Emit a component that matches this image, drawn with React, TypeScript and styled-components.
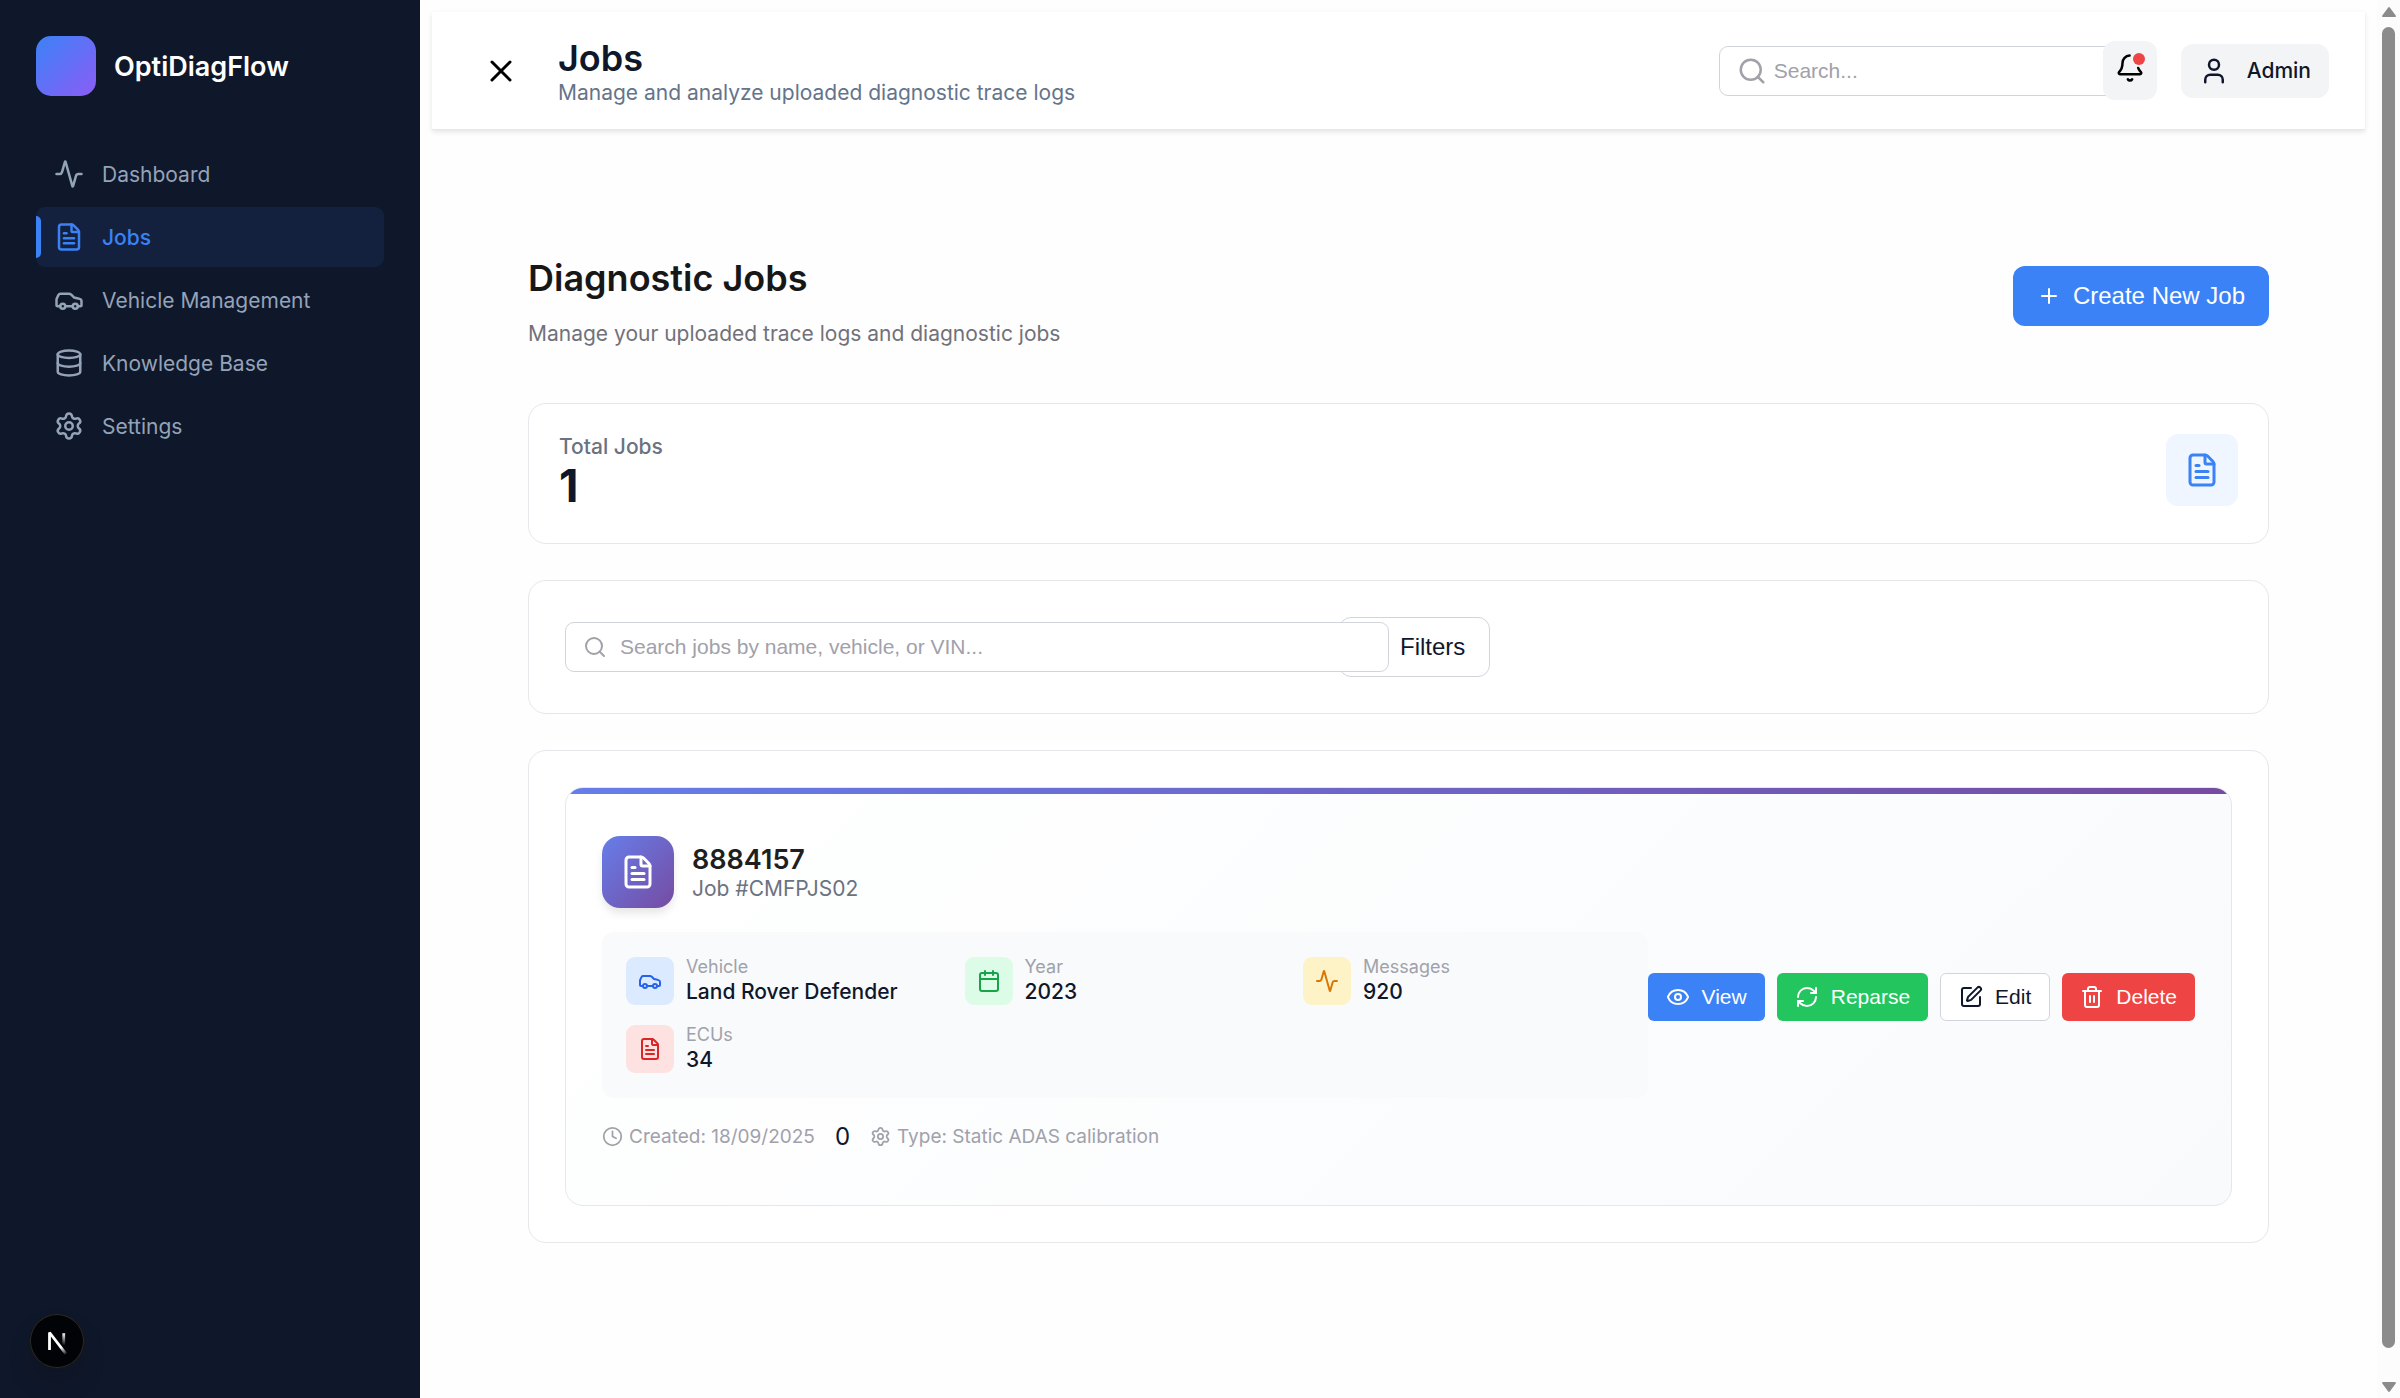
import React from 'react';
import styled, { createGlobalStyle } from 'styled-components';
import {
  Activity,
  Calendar,
  Clock,
  Database,
  Eye,
  FileText,
  Funnel,
  Plus,
  RefreshCw,
  Search,
  Settings,
  SquarePen,
  Trash2,
  User,
  X,
} from 'lucide-react';

const sans = `Inter, 'Liberation Sans', sans-serif`;
const control = `'Liberation Sans', Arial, sans-serif`;

const GlobalStyle = createGlobalStyle`
  *, *::before, *::after { box-sizing: border-box; }
  body {
    margin: 0;
    background: #fefefe;
    color: #0f172a;
    font-family: ${sans};
    font-size: 24px;
  }
  h1, h2, h3, p, dl, dd, dt, ul { margin: 0; padding: 0; }
  ul { list-style: none; }
  svg { display: block; flex: none; }
  button { cursor: pointer; }
`;

const Shell = styled.div`
  display: grid;
  grid-template-columns: 420px minmax(0, 1fr) 23px;
  min-height: 100vh;
`;

/* Sidebar */

const Sidebar = styled.aside`
  position: sticky;
  top: 0;
  height: 100vh;
  padding: 36px;
  background: #0f172a;
`;

const Brand = styled.div`
  display: flex;
  align-items: center;
  gap: 18px;
  margin-bottom: 48px;
  color: #ffffff;
  font-size: 27px;
  font-weight: 600;
`;

const BrandMark = styled.span`
  width: 60px;
  height: 60px;
  border-radius: 15px;
  background: linear-gradient(135deg, #3b82f6, #8b5cf6);
`;

const NavList = styled.ul`
  display: flex;
  flex-direction: column;
  gap: 3px;
`;

const NavLink = styled.a<{ $active?: boolean }>`
  position: relative;
  display: flex;
  align-items: center;
  gap: 18px;
  height: 60px;
  padding: 0 18px;
  border-radius: 9px;
  background: ${(p) => (p.$active ? 'rgba(59, 130, 246, 0.1)' : 'transparent')};
  color: ${(p) => (p.$active ? '#3b82f6' : '#94a3b8')};
  font-size: 21px;
  font-weight: ${(p) => (p.$active ? 500 : 400)};
  text-decoration: none;

  &::before {
    content: '';
    display: ${(p) => (p.$active ? 'block' : 'none')};
    position: absolute;
    left: 0;
    top: 9px;
    bottom: 9px;
    width: 5px;
    border-radius: 0 5px 5px 0;
    background: #3b82f6;
  }
`;

const DevBadge = styled.button`
  position: fixed;
  left: 30px;
  bottom: 30px;
  width: 54px;
  height: 54px;
  padding: 0;
  border: 0;
  border-radius: 50%;
  background: #020307;
  box-shadow: inset 0 0 0 1px #2b2b2b, 0 0 0 1px #171717, 0 16px 32px -8px rgba(0, 0, 0, 0.24);
`;

/* Header */

const Page = styled.div`
  padding: 12px;
`;

const TopBar = styled.header`
  display: flex;
  align-items: center;
  justify-content: space-between;
  height: 118px;
  padding: 0 36px;
  border-bottom: 1px solid #e5e7eb;
  background: #ffffff;
  box-shadow: 0 2px 5px rgba(0, 0, 0, 0.1);
`;

const TopGroup = styled.div`
  display: flex;
  align-items: center;
  gap: 24px;
`;

const CloseButton = styled.button`
  padding: 15px;
  border: 0;
  background: transparent;
  color: #000000;
`;

const TopTitle = styled.h1`
  font-size: 36px;
  font-weight: 600;
  line-height: 44px;
`;

const TopSubtitle = styled.p`
  color: #64748b;
  font-size: 21px;
  line-height: 25px;
`;

const SearchField = styled.label<{ $width: number; $raised?: boolean }>`
  position: relative;
  display: flex;
  align-items: center;
  width: ${(p) => p.$width}px;
  z-index: ${(p) => (p.$raised ? 1 : 0)};

  svg {
    position: absolute;
    left: 18px;
    color: #a1a1aa;
    pointer-events: none;
  }
`;

const SearchInput = styled.input`
  flex: none;
  width: calc(100% + 74px);
  height: 50px;
  padding: 0 18px 0 54px;
  border: 1px solid #d1d5db;
  border-radius: 9px;
  background: #ffffff;
  color: #0f172a;
  font-family: ${control};
  font-size: 21px;

  &::placeholder {
    color: #a1a1aa;
    opacity: 1;
  }
`;

const BellButton = styled.button`
  position: relative;
  width: 54px;
  height: 59px;
  padding: 12px;
  border: 0;
  border-radius: 12px;
  background: #f3f4f6;
  color: #000000;
  display: flex;
  align-items: flex-start;
  z-index: 1;
`;

const AlertDot = styled.span`
  position: absolute;
  top: 12px;
  right: 12px;
  width: 12px;
  height: 12px;
  border-radius: 50%;
  background: #ef4444;
`;

const AdminButton = styled.button`
  display: flex;
  align-items: center;
  gap: 18px;
  height: 54px;
  padding: 0 18px;
  border: 0;
  border-radius: 12px;
  background: #f3f4f6;
  color: #0f172a;
  font-family: ${sans};
  font-size: 21px;
  font-weight: 500;
`;

/* Jobs page */

const Content = styled.main`
  display: flex;
  flex-direction: column;
  gap: 36px;
  padding: 115px 96px 144px;
`;

const PageHead = styled.div`
  display: flex;
  align-items: center;
  justify-content: space-between;
  margin-bottom: 20px;
`;

const PageTitle = styled.h2`
  margin-bottom: 10px;
  color: #171717;
  font-size: 36px;
  font-weight: 600;
  line-height: 66px;
`;

const PageSubtitle = styled.p`
  color: #71717a;
  font-size: 21px;
  line-height: 26px;
`;

type Tone = 'primary' | 'success' | 'outline' | 'danger';

const tones: Record<Tone, string> = {
  primary: 'background: #3b82f6; color: #ffffff; border: 0;',
  success: 'background: #22c55e; color: #ffffff; border: 0;',
  outline: 'background: #ffffff; color: #0f172a; border: 1px solid #d1d5db;',
  danger: 'background: #ef4444; color: #ffffff; border: 0;',
};

const Button = styled.button<{ $tone: Tone; $size?: 'small' }>`
  display: flex;
  align-items: center;
  gap: 12px;
  height: ${(p) => (p.$size ? 48 : 60)}px;
  padding: 0 ${(p) => (p.$size ? 18 : 24)}px;
  border-radius: ${(p) => (p.$size ? 6 : 12)}px;
  font-family: ${control};
  font-size: ${(p) => (p.$size ? 21 : 24)}px;
  ${(p) => tones[p.$tone]}
`;

const Card = styled.section<{ $pad?: number }>`
  padding: ${(p) => p.$pad ?? 36}px;
  border: 1px solid #e5e7eb;
  border-radius: 18px;
  background: #ffffff;
`;

const StatCard = styled(Card)`
  display: flex;
  align-items: flex-start;
  justify-content: space-between;
`;

const StatLabel = styled.p`
  color: #6b7280;
  font-size: 21px;
  font-weight: 500;
  line-height: 25px;
`;

const StatValue = styled.p`
  font-size: 45px;
  font-weight: 700;
  line-height: 54px;
`;

const StatIcon = styled.span`
  display: grid;
  place-items: center;
  width: 72px;
  height: 72px;
  border-radius: 12px;
  background: #eff6ff;
  color: #3b82f6;
`;

const FilterBar = styled(Card)`
  display: flex;
  align-items: center;
  gap: 24px;
`;

const JobCard = styled.article`
  position: relative;
  display: flex;
  align-items: center;
  padding: 48px 36px;
  border: 1px solid #e2e8f0;
  border-radius: 18px;
  background: linear-gradient(135deg, #ffffff, #f8fafc);
  overflow: hidden;

  &::before {
    content: '';
    position: absolute;
    inset: 0 0 auto;
    height: 6px;
    background: linear-gradient(90deg, #667eea, #764ba2);
  }
`;

const JobBody = styled.div`
  display: flex;
  flex: 1;
  flex-direction: column;
  gap: 24px;
  min-width: 0;
`;

const JobHead = styled.div`
  display: flex;
  align-items: center;
  gap: 18px;
`;

const JobIcon = styled.span`
  display: grid;
  place-items: center;
  width: 72px;
  height: 72px;
  border-radius: 18px;
  background: linear-gradient(135deg, #667eea, #764ba2);
  box-shadow: 0 6px 9px -1px rgba(0, 0, 0, 0.1);
  color: #ffffff;
`;

const JobTitle = styled.h3`
  color: #1f1f1f;
  font-size: 27px;
  font-weight: 600;
  line-height: 33px;
`;

const JobNumber = styled.p`
  color: #6b7280;
  font-size: 21px;
  line-height: 25px;
`;

const FactGrid = styled.dl`
  display: grid;
  grid-template-columns: repeat(3, minmax(0, 1fr));
  gap: 18px;
  padding: 24px;
  border-radius: 12px;
  background: #f8fafc;
`;

const Fact = styled.div`
  display: flex;
  align-items: center;
  gap: 12px;
  height: 50px;
`;

const FactIcon = styled.span<{ $bg: string; $fg: string }>`
  display: grid;
  place-items: center;
  width: 48px;
  height: 48px;
  border-radius: 9px;
  background: ${(p) => p.$bg};
  color: ${(p) => p.$fg};
`;

const FactLabel = styled.dt`
  color: #a1a1aa;
  font-size: 18px;
  line-height: 22px;
`;

const FactValue = styled.dd`
  font-size: 21px;
  font-weight: 500;
  line-height: 28px;
`;

const JobMeta = styled.div`
  display: flex;
  align-items: center;
  gap: 20px;
  margin-bottom: 6px;
  line-height: 29px;
`;

const MetaItem = styled.span`
  display: flex;
  align-items: center;
  gap: 6px;
  color: #a1a1aa;
  font-size: 19px;
`;

const JobActions = styled.div`
  display: flex;
  gap: 12px;
`;

/* Scroll rail */

const Rail = styled.div`
  position: sticky;
  top: 0;
  display: flex;
  flex-direction: column;
  align-items: center;
  gap: 10px;
  height: 100vh;
  padding: 7px 0 6px;
  background: #fcfcfc;
  color: #8b8b8b;
`;

const RailTrack = styled.div`
  flex: 1;
`;

const RailThumb = styled.div`
  width: 13px;
  height: calc(100% - 24px);
  border-radius: 7px;
  background: #8b8b8b;
`;

const CarIcon = ({ size }: { size: number }) => (
  <svg width={size} height={size} viewBox="0 0 24 24" fill="none" stroke="currentColor" strokeWidth="2" strokeLinecap="round" strokeLinejoin="round" aria-hidden="true">
    <path d="M19 17h2c.6 0 1-.4 1-1v-3c0-.9-.7-1.7-1.5-1.9C18.7 10.6 16 10 16 10s-1.3-1.4-2.2-2.3c-.5-.4-1.1-.7-1.8-.7H5c-.6 0-1.1.4-1.4.9l-1.4 2.9A3.7 3.7 0 0 0 2 12v4c0 .6.4 1 1 1h2" />
    <circle cx="7" cy="17" r="2" />
    <path d="M9 17h6" />
    <circle cx="17" cy="17" r="2" />
  </svg>
);

const BellIcon = ({ size }: { size: number }) => (
  <svg width={size} height={size} viewBox="0 0 24 24" fill="none" stroke="currentColor" strokeWidth="2" strokeLinecap="round" strokeLinejoin="round" aria-hidden="true">
    <path d="M10.268 21a2 2 0 0 0 3.464 0" />
    <path d="M11.680 2.009A6 6 0 0 0 6 8c0 4.499-1.411 5.956-2.738 7.326A1 1 0 0 0 4 17h16a1 1 0 0 0 .74-1.673c-.824-.85-1.678-1.731-2.210-3.348" />
  </svg>
);

const NextMark = () => (
  <svg width="54" height="54" viewBox="0 0 54 54" fill="none" aria-hidden="true">
    <defs>
      <linearGradient id="markDiagonal" gradientUnits="userSpaceOnUse" x1="9.9" y1="11.1" x2="13.6" y2="15.8">
        <stop stopColor="#ffffff" />
        <stop offset="1" stopColor="#ffffff" stopOpacity="0" />
      </linearGradient>
      <linearGradient id="markStem" gradientUnits="userSpaceOnUse" x1="11.8" y1="1.4" x2="11.8" y2="9.6">
        <stop stopColor="#ffffff" />
        <stop offset="1" stopColor="#ffffff" stopOpacity="0" />
      </linearGradient>
    </defs>
    <g transform="translate(16 17) scale(1.5)" strokeWidth="1.86">
      <path d="M13.3 15.2 L2.34 1 V12.6" stroke="url(#markDiagonal)" strokeLinejoin="bevel" />
      <path d="M11.825 1.5 V13.1" stroke="url(#markStem)" />
    </g>
  </svg>
);

const navItems = [
  { label: 'Dashboard', icon: <Activity size={30} /> },
  { label: 'Jobs', icon: <FileText size={30} />, active: true },
  { label: 'Vehicle Management', icon: <CarIcon size={30} /> },
  { label: 'Knowledge Base', icon: <Database size={30} /> },
  { label: 'Settings', icon: <Settings size={30} /> },
];

const facts = [
  { label: 'Vehicle', value: 'Land Rover Defender', icon: <CarIcon size={24} />, bg: '#dbeafe', fg: '#2563eb' },
  { label: 'Year', value: '2023', icon: <Calendar size={24} />, bg: '#dcfce7', fg: '#16a34a' },
  { label: 'Messages', value: '920', icon: <Activity size={24} />, bg: '#fef3c7', fg: '#d97706' },
  { label: 'ECUs', value: '34', icon: <FileText size={24} />, bg: '#fee2e2', fg: '#dc2626' },
];

export default function App() {
  return (
    <>
      <GlobalStyle />
      <Shell>
        <Sidebar>
          <Brand>
            <BrandMark />
            OptiDiagFlow
          </Brand>
          <nav>
            <NavList>
              {navItems.map((item) => (
                <li key={item.label}>
                  <NavLink href="#" $active={item.active}>
                    {item.icon}
                    {item.label}
                  </NavLink>
                </li>
              ))}
            </NavList>
          </nav>
          <DevBadge aria-label="Open developer tools">
            <NextMark />
          </DevBadge>
        </Sidebar>

        <Page>
          <TopBar>
            <TopGroup>
              <CloseButton aria-label="Close menu">
                <X size={36} />
              </CloseButton>
              <div>
                <TopTitle>Jobs</TopTitle>
                <TopSubtitle>Manage and analyze uploaded diagnostic trace logs</TopSubtitle>
              </div>
            </TopGroup>
            <TopGroup>
              <SearchField $width={360}>
                <SearchInput type="text" placeholder="Search..." aria-label="Search" />
                <Search size={30} />
              </SearchField>
              <BellButton aria-label="Notifications">
                <BellIcon size={30} />
                <AlertDot />
              </BellButton>
              <AdminButton>
                <User size={30} />
                Admin
              </AdminButton>
            </TopGroup>
          </TopBar>

          <Content>
            <PageHead>
              <div>
                <PageTitle>Diagnostic Jobs</PageTitle>
                <PageSubtitle>Manage your uploaded trace logs and diagnostic jobs</PageSubtitle>
              </div>
              <Button $tone="primary">
                <Plus size={24} />
                Create New Job
              </Button>
            </PageHead>

            <StatCard $pad={30}>
              <div>
                <StatLabel>Total Jobs</StatLabel>
                <StatValue>1</StatValue>
              </div>
              <StatIcon>
                <FileText size={36} />
              </StatIcon>
            </StatCard>

            <FilterBar>
              <SearchField $width={750} $raised>
                <SearchInput
                  type="text"
                  placeholder="Search jobs by name, vehicle, or VIN..."
                  aria-label="Search jobs"
                />
                <Search size={24} />
              </SearchField>
              <Button $tone="outline">
                <Funnel size={24} />
                Filters
              </Button>
            </FilterBar>

            <Card>
              <JobCard>
                <JobBody>
                  <JobHead>
                    <JobIcon>
                      <FileText size={36} />
                    </JobIcon>
                    <div>
                      <JobTitle>8884157</JobTitle>
                      <JobNumber>Job #CMFPJS02</JobNumber>
                    </div>
                  </JobHead>
                  <FactGrid>
                    {facts.map((fact) => (
                      <Fact key={fact.label}>
                        <FactIcon $bg={fact.bg} $fg={fact.fg}>
                          {fact.icon}
                        </FactIcon>
                        <div>
                          <FactLabel>{fact.label}</FactLabel>
                          <FactValue>{fact.value}</FactValue>
                        </div>
                      </Fact>
                    ))}
                  </FactGrid>
                  <JobMeta>
                    <MetaItem>
                      <Clock size={21} />
                      Created: 18/09/2025
                    </MetaItem>
                    0
                    <MetaItem>
                      <Settings size={21} />
                      Type: Static ADAS calibration
                    </MetaItem>
                  </JobMeta>
                </JobBody>
                <JobActions>
                  <Button $tone="primary" $size="small">
                    <Eye size={24} />
                    View
                  </Button>
                  <Button $tone="success" $size="small">
                    <RefreshCw size={24} />
                    Reparse
                  </Button>
                  <Button $tone="outline" $size="small">
                    <SquarePen size={24} />
                    Edit
                  </Button>
                  <Button $tone="danger" $size="small">
                    <Trash2 size={24} />
                    Delete
                  </Button>
                </JobActions>
              </JobCard>
            </Card>
          </Content>
        </Page>

        <Rail aria-hidden="true">
          <svg width="14" height="10" viewBox="0 0 14 10" fill="currentColor">
            <path d="M6 .8a1.2 1.2 0 0 1 2 0l5.700 7.600A1 1 0 0 1 13 10H1a1 1 0 0 1-.7-1.600z" />
          </svg>
          <RailTrack>
            <RailThumb />
          </RailTrack>
          <svg width="14" height="10" viewBox="0 0 14 10" fill="currentColor">
            <path d="M6 9.200a1.200 1.200 0 0 0 2 0l5.700-7.600A1 1 0 0 0 13 0H1a1 1 0 0 0-.7 1.600z" />
          </svg>
        </Rail>
      </Shell>
    </>
  );
}
